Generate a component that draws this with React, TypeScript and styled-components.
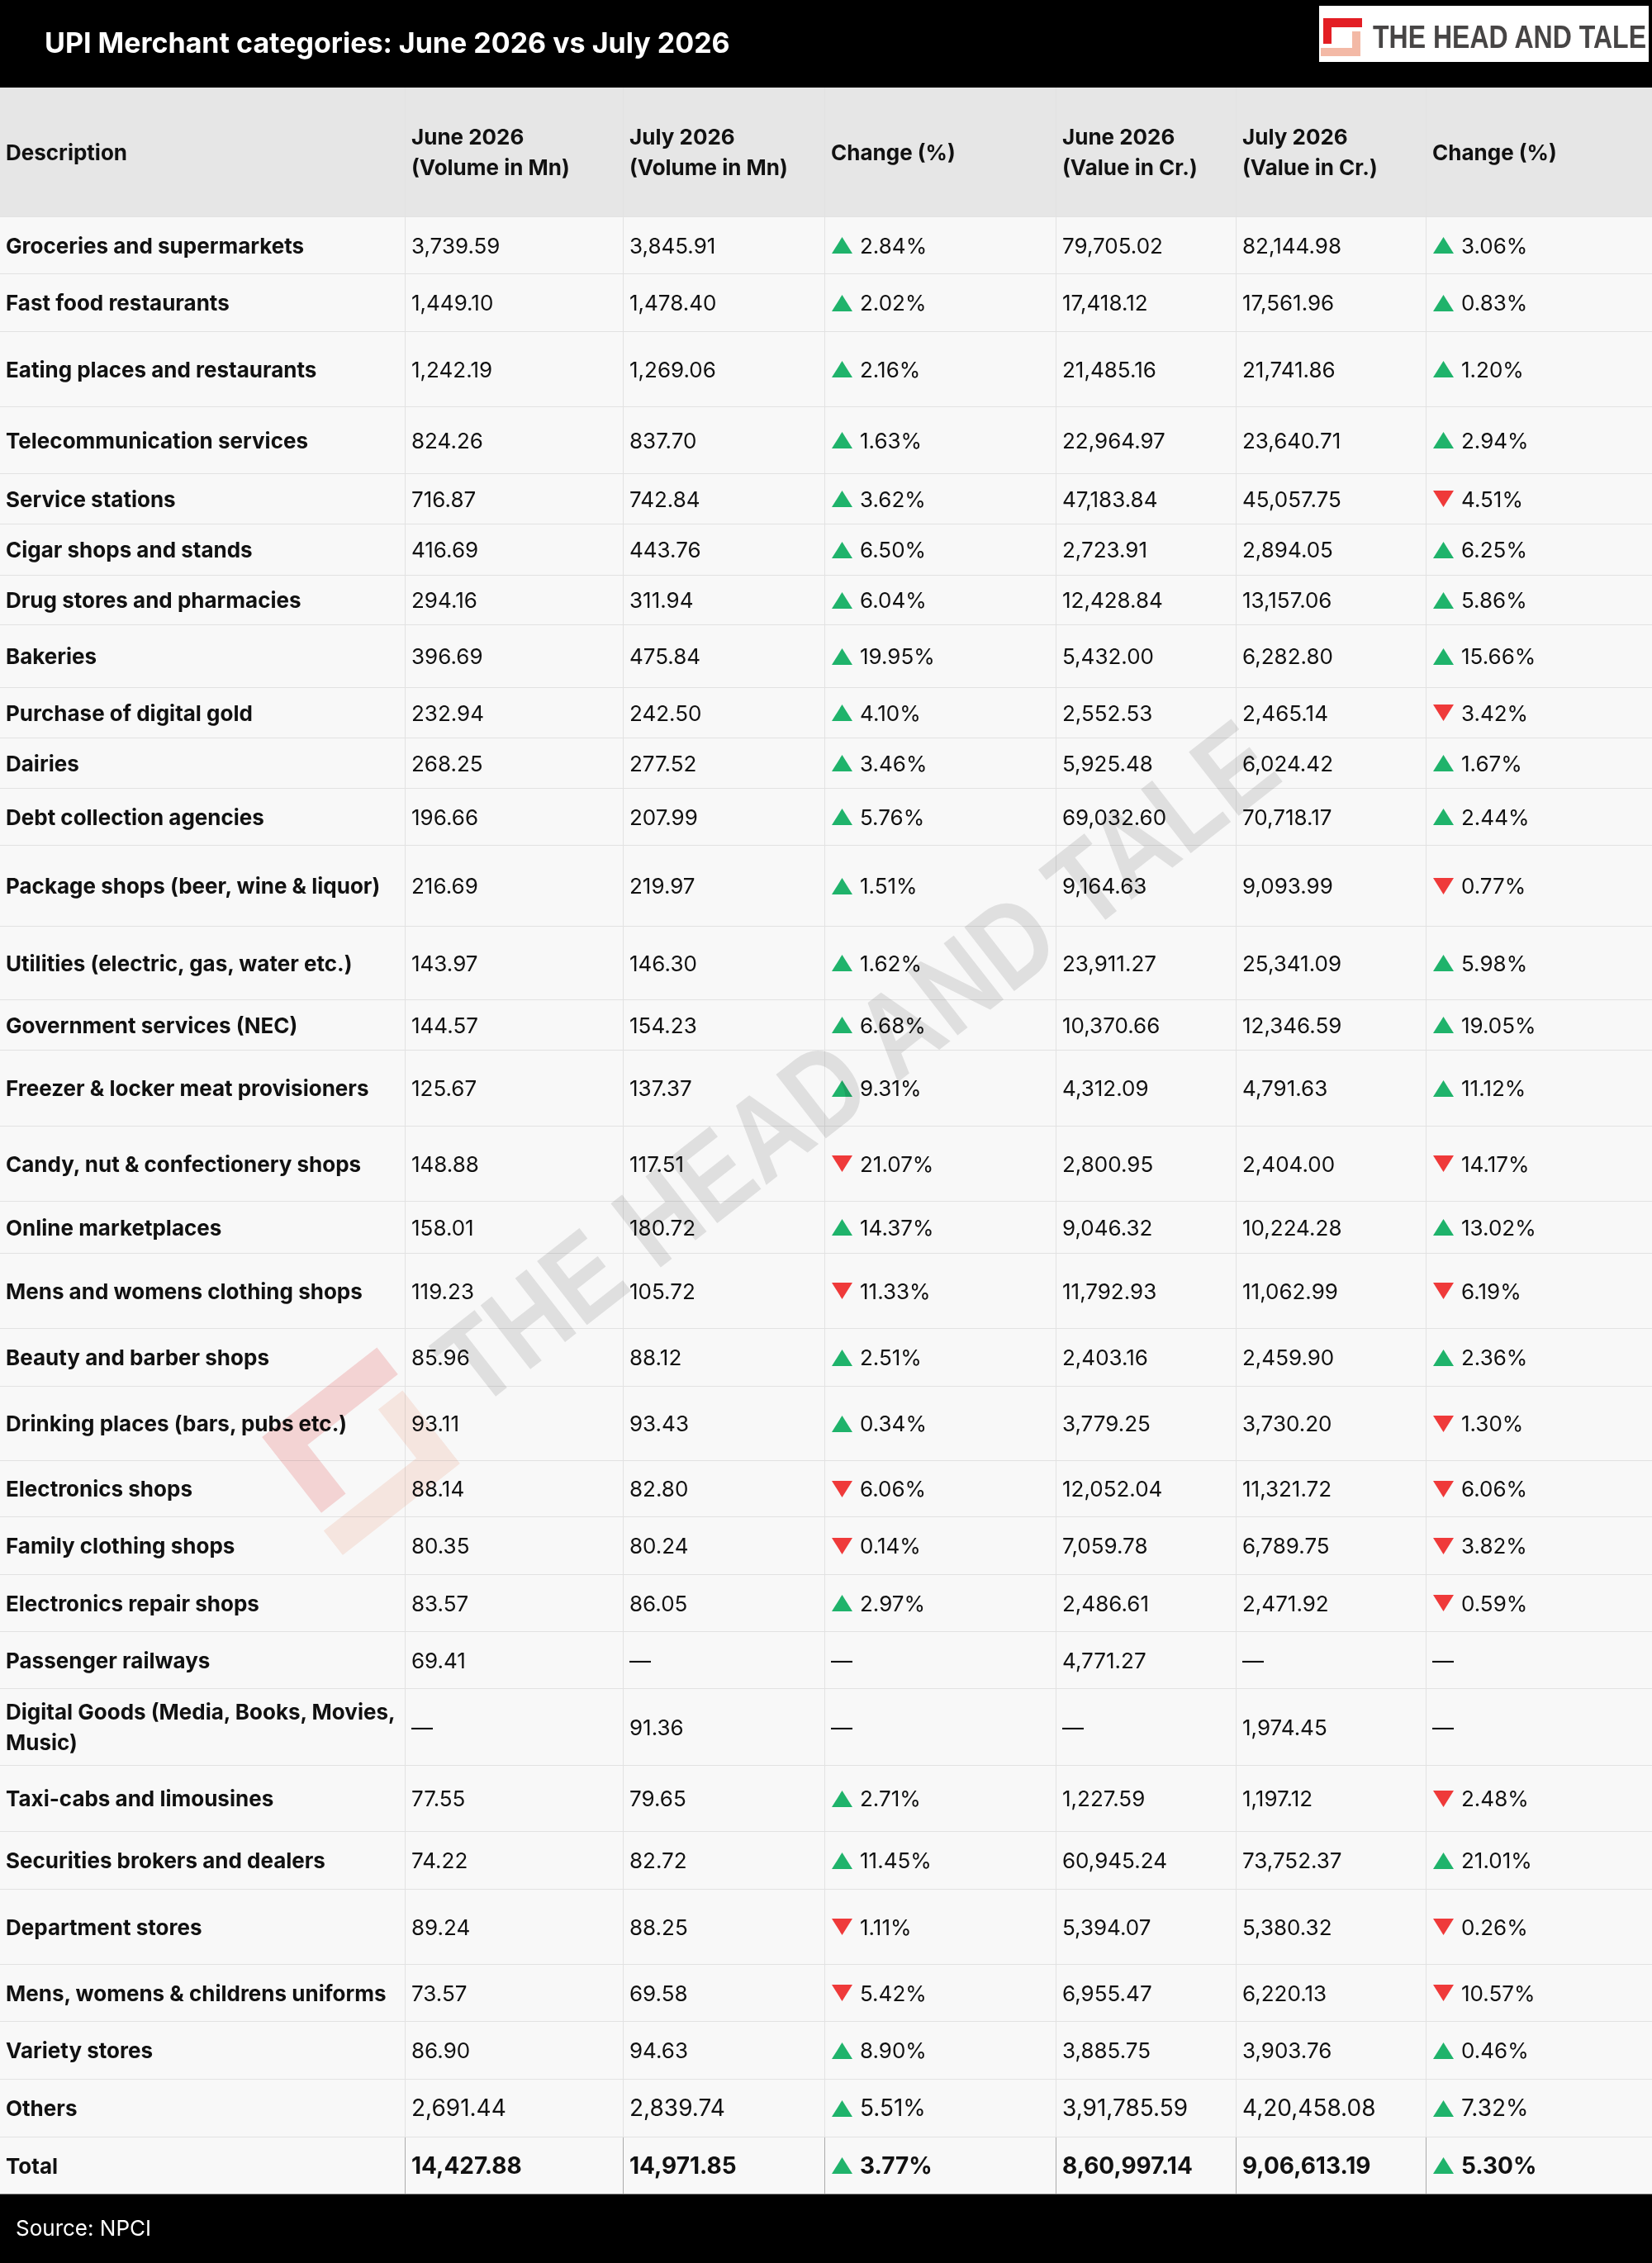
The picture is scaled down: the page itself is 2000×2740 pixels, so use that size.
import styled, { createGlobalStyle } from "styled-components";

const GlobalStyle = createGlobalStyle`
  body {
    margin: 0;
    background: #000;
    font-family: Inter, "Noto Sans", "Liberation Sans", sans-serif;
    color: #111;
  }
`;

const COLUMNS = "491px 264px 244px 280px 218px 230px 273px";

type Dir = "up" | "down" | null;

interface Entry {
  name: string;
  juneVol: string;
  julyVol: string;
  volChange: string;
  volDir: Dir;
  juneVal: string;
  julyVal: string;
  valChange: string;
  valDir: Dir;
  h: number;
}

const D = "—";

const rows: Entry[] = [
  { name: "Groceries and supermarkets", juneVol: "3,739.59", julyVol: "3,845.91", volChange: "2.84%", volDir: "up", juneVal: "79,705.02", julyVal: "82,144.98", valChange: "3.06%", valDir: "up", h: 69 },
  { name: "Fast food restaurants", juneVol: "1,449.10", julyVol: "1,478.40", volChange: "2.02%", volDir: "up", juneVal: "17,418.12", julyVal: "17,561.96", valChange: "0.83%", valDir: "up", h: 70 },
  { name: "Eating places and restaurants", juneVol: "1,242.19", julyVol: "1,269.06", volChange: "2.16%", volDir: "up", juneVal: "21,485.16", julyVal: "21,741.86", valChange: "1.20%", valDir: "up", h: 91 },
  { name: "Telecommunication services", juneVol: "824.26", julyVol: "837.70", volChange: "1.63%", volDir: "up", juneVal: "22,964.97", julyVal: "23,640.71", valChange: "2.94%", valDir: "up", h: 81 },
  { name: "Service stations", juneVol: "716.87", julyVol: "742.84", volChange: "3.62%", volDir: "up", juneVal: "47,183.84", julyVal: "45,057.75", valChange: "4.51%", valDir: "down", h: 61 },
  { name: "Cigar shops and stands", juneVol: "416.69", julyVol: "443.76", volChange: "6.50%", volDir: "up", juneVal: "2,723.91", julyVal: "2,894.05", valChange: "6.25%", valDir: "up", h: 62 },
  { name: "Drug stores and pharmacies", juneVol: "294.16", julyVol: "311.94", volChange: "6.04%", volDir: "up", juneVal: "12,428.84", julyVal: "13,157.06", valChange: "5.86%", valDir: "up", h: 60 },
  { name: "Bakeries", juneVol: "396.69", julyVol: "475.84", volChange: "19.95%", volDir: "up", juneVal: "5,432.00", julyVal: "6,282.80", valChange: "15.66%", valDir: "up", h: 76 },
  { name: "Purchase of digital gold", juneVol: "232.94", julyVol: "242.50", volChange: "4.10%", volDir: "up", juneVal: "2,552.53", julyVal: "2,465.14", valChange: "3.42%", valDir: "down", h: 61 },
  { name: "Dairies", juneVol: "268.25", julyVol: "277.52", volChange: "3.46%", volDir: "up", juneVal: "5,925.48", julyVal: "6,024.42", valChange: "1.67%", valDir: "up", h: 61 },
  { name: "Debt collection agencies", juneVol: "196.66", julyVol: "207.99", volChange: "5.76%", volDir: "up", juneVal: "69,032.60", julyVal: "70,718.17", valChange: "2.44%", valDir: "up", h: 69 },
  { name: "Package shops (beer, wine & liquor)", juneVol: "216.69", julyVol: "219.97", volChange: "1.51%", volDir: "up", juneVal: "9,164.63", julyVal: "9,093.99", valChange: "0.77%", valDir: "down", h: 98 },
  { name: "Utilities (electric, gas, water etc.)", juneVol: "143.97", julyVol: "146.30", volChange: "1.62%", volDir: "up", juneVal: "23,911.27", julyVal: "25,341.09", valChange: "5.98%", valDir: "up", h: 89 },
  { name: "Government services (NEC)", juneVol: "144.57", julyVol: "154.23", volChange: "6.68%", volDir: "up", juneVal: "10,370.66", julyVal: "12,346.59", valChange: "19.05%", valDir: "up", h: 61 },
  { name: "Freezer & locker meat provisioners", juneVol: "125.67", julyVol: "137.37", volChange: "9.31%", volDir: "up", juneVal: "4,312.09", julyVal: "4,791.63", valChange: "11.12%", valDir: "up", h: 92 },
  { name: "Candy, nut & confectionery shops", juneVol: "148.88", julyVol: "117.51", volChange: "21.07%", volDir: "down", juneVal: "2,800.95", julyVal: "2,404.00", valChange: "14.17%", valDir: "down", h: 91 },
  { name: "Online marketplaces", juneVol: "158.01", julyVol: "180.72", volChange: "14.37%", volDir: "up", juneVal: "9,046.32", julyVal: "10,224.28", valChange: "13.02%", valDir: "up", h: 63 },
  { name: "Mens and womens clothing shops", juneVol: "119.23", julyVol: "105.72", volChange: "11.33%", volDir: "down", juneVal: "11,792.93", julyVal: "11,062.99", valChange: "6.19%", valDir: "down", h: 91 },
  { name: "Beauty and barber shops", juneVol: "85.96", julyVol: "88.12", volChange: "2.51%", volDir: "up", juneVal: "2,403.16", julyVal: "2,459.90", valChange: "2.36%", valDir: "up", h: 70 },
  { name: "Drinking places (bars, pubs etc.)", juneVol: "93.11", julyVol: "93.43", volChange: "0.34%", volDir: "up", juneVal: "3,779.25", julyVal: "3,730.20", valChange: "1.30%", valDir: "down", h: 90 },
  { name: "Electronics shops", juneVol: "88.14", julyVol: "82.80", volChange: "6.06%", volDir: "down", juneVal: "12,052.04", julyVal: "11,321.72", valChange: "6.06%", valDir: "down", h: 68 },
  { name: "Family clothing shops", juneVol: "80.35", julyVol: "80.24", volChange: "0.14%", volDir: "down", juneVal: "7,059.78", julyVal: "6,789.75", valChange: "3.82%", valDir: "down", h: 70 },
  { name: "Electronics repair shops", juneVol: "83.57", julyVol: "86.05", volChange: "2.97%", volDir: "up", juneVal: "2,486.61", julyVal: "2,471.92", valChange: "0.59%", valDir: "down", h: 69 },
  { name: "Passenger railways", juneVol: "69.41", julyVol: D, volChange: D, volDir: null, juneVal: "4,771.27", julyVal: D, valChange: D, valDir: null, h: 69 },
  { name: "Digital Goods (Media, Books, Movies,\nMusic)", juneVol: D, julyVol: "91.36", volChange: D, volDir: null, juneVal: D, julyVal: "1,974.45", valChange: D, valDir: null, h: 93 },
  { name: "Taxi-cabs and limousines", juneVol: "77.55", julyVol: "79.65", volChange: "2.71%", volDir: "up", juneVal: "1,227.59", julyVal: "1,197.12", valChange: "2.48%", valDir: "down", h: 80 },
  { name: "Securities brokers and dealers", juneVol: "74.22", julyVol: "82.72", volChange: "11.45%", volDir: "up", juneVal: "60,945.24", julyVal: "73,752.37", valChange: "21.01%", valDir: "up", h: 70 },
  { name: "Department stores", juneVol: "89.24", julyVol: "88.25", volChange: "1.11%", volDir: "down", juneVal: "5,394.07", julyVal: "5,380.32", valChange: "0.26%", valDir: "down", h: 91 },
  { name: "Mens, womens & childrens uniforms", juneVol: "73.57", julyVol: "69.58", volChange: "5.42%", volDir: "down", juneVal: "6,955.47", julyVal: "6,220.13", valChange: "10.57%", valDir: "down", h: 69 },
  { name: "Variety stores", juneVol: "86.90", julyVol: "94.63", volChange: "8.90%", volDir: "up", juneVal: "3,885.75", julyVal: "3,903.76", valChange: "0.46%", valDir: "up", h: 70 },
];

const others: Entry = { name: "Others", juneVol: "2,691.44", julyVol: "2,839.74", volChange: "5.51%", volDir: "up", juneVal: "3,91,785.59", julyVal: "4,20,458.08", valChange: "7.32%", valDir: "up", h: 70 };
const total: Entry = { name: "Total", juneVol: "14,427.88", julyVol: "14,971.85", volChange: "3.77%", volDir: "up", juneVal: "8,60,997.14", julyVal: "9,06,613.19", valChange: "5.30%", valDir: "up", h: 69 };

const Page = styled.div`
  position: relative;
  width: 2000px;
  overflow: hidden;
`;

const TopBar = styled.header`
  height: 106px;
  box-sizing: border-box;
  padding-left: 54px;
  background: #000;
  display: flex;
  justify-content: space-between;
  align-items: flex-start;
`;

const Title = styled.h1`
  margin: 0;
  align-self: center;
  color: #fff;
  font-size: 34px;
  font-weight: 700;
  line-height: 1;
  padding-bottom: 2px;
`;

const LogoBox = styled.svg`
  display: block;
  margin: 7px 4px 0 0;
  width: 399px;
  height: 68px;
  background: #fff;
`;

const Table = styled.div`
  background: #f8f8f8;
`;

const Row = styled.div<{ $h: number; $head?: boolean; $strong?: boolean }>`
  display: grid;
  grid-template-columns: ${COLUMNS};
  height: ${({ $h }) => $h}px;
  box-sizing: border-box;
  border-bottom: 1px solid ${({ $strong }) => ($strong ? "#8c8c8c" : "#e2e2e2")};
  background: ${({ $head }) => ($head ? "#e6e6e6" : "#f8f8f8")};
`;

const Cell = styled.div<{ $bold?: boolean; $size?: number; $strong?: boolean }>`
  display: flex;
  align-items: center;
  padding: 0 7px;
  box-sizing: border-box;
  border-right: 1px solid ${({ $strong }) => ($strong ? "#ababab" : "#e2e2e2")};
  font-size: ${({ $size }) => $size ?? 26}px;
  font-weight: ${({ $bold }) => ($bold ? 700 : 400)};
  line-height: 37px;
  white-space: pre-line;
  color: #111;
  &:last-child {
    border-right: none;
  }
`;

const Change = styled.span`
  display: inline-flex;
  align-items: center;
  gap: 9px;
`;

const Arrow = styled.svg`
  display: block;
  width: 25px;
  height: 20px;
  margin-left: 1px;
  flex: none;
`;

const Footer = styled.footer`
  height: 83px;
  box-sizing: border-box;
  padding: 0 0 2px 19px;
  background: #000;
  color: #fff;
  display: flex;
  align-items: center;
  font-size: 26px;
`;

const Watermark = styled.svg`
  position: absolute;
  left: 205px;
  top: 1266px;
  width: 1478px;
  height: 188px;
  transform: rotate(-38deg);
  transform-origin: center;
  pointer-events: none;
  mix-blend-mode: multiply;
`;

function LogoArt({ faint }: { faint?: boolean }) {
  return (
    <>
      <rect x="5" y="15" width="47" height="11" fill={faint ? "#fad9d9" : "#e31e24"} />
      <rect x="5" y="15" width="10" height="31" fill={faint ? "#fad9d9" : "#e31e24"} />
      <rect x="2" y="51" width="48" height="10" fill={faint ? "#fcece6" : "#f3b9a6"} />
      <rect x="40" y="31" width="10" height="30" fill={faint ? "#fcece6" : "#f3b9a6"} />
      <text
        x="65"
        y="51"
        textLength="331"
        lengthAdjust="spacingAndGlyphs"
        fontFamily="'Liberation Sans', Arial, sans-serif"
        fontWeight="700"
        fontSize="38"
        fill={faint ? "#e6e6e6" : "#474545"}
      >
        THE HEAD AND TALE
      </text>
    </>
  );
}

function Trend({ dir, value }: { dir: Dir; value: string }) {
  if (!dir) return <>{value}</>;
  return (
    <Change>
      <Arrow viewBox="0 0 25 20">
        {dir === "up" ? (
          <polygon points="12.5,0 25,20 0,20" fill="#1fb36b" />
        ) : (
          <polygon points="0,0 25,0 12.5,20" fill="#ef3a3a" />
        )}
      </Arrow>
      {value}
    </Change>
  );
}

function DataRow({ e, size, bold, strong }: { e: Entry; size?: number; bold?: boolean; strong?: boolean }) {
  return (
    <Row $h={e.h} $strong={strong}>
      <Cell $bold $strong={strong}>{e.name}</Cell>
      <Cell $size={size} $bold={bold} $strong={strong}>{e.juneVol}</Cell>
      <Cell $size={size} $bold={bold} $strong={strong}>{e.julyVol}</Cell>
      <Cell $size={size} $bold={bold} $strong={strong}>
        <Trend dir={e.volDir} value={e.volChange} />
      </Cell>
      <Cell $size={size} $bold={bold} $strong={strong}>{e.juneVal}</Cell>
      <Cell $size={size} $bold={bold} $strong={strong}>{e.julyVal}</Cell>
      <Cell $size={size} $bold={bold} $strong={strong}>
        <Trend dir={e.valDir} value={e.valChange} />
      </Cell>
    </Row>
  );
}

export default function App() {
  const heads = [
    "Description",
    "June 2026\n(Volume in Mn)",
    "July 2026\n(Volume in Mn)",
    "Change (%)",
    "June 2026\n(Value in Cr.)",
    "July 2026\n(Value in Cr.)",
    "Change (%)",
  ];

  return (
    <Page>
      <GlobalStyle />
      <TopBar>
        <Title>UPI Merchant categories: June 2026 vs July 2026</Title>
        <LogoBox viewBox="0 0 399 68">
          <LogoArt />
        </LogoBox>
      </TopBar>
      <Table>
        <Row $h={157} $head>
          {heads.map((h, i) => (
            <Cell key={i} $bold>
              {h}
            </Cell>
          ))}
        </Row>
        {rows.map((r) => (
          <DataRow key={r.name} e={r} />
        ))}
        <DataRow e={others} size={28} />
        <DataRow e={total} size={28} bold strong />
      </Table>
      <Footer>Source: NPCI</Footer>
      <Watermark viewBox="2 13 394 50">
        <LogoArt faint />
      </Watermark>
    </Page>
  );
}
